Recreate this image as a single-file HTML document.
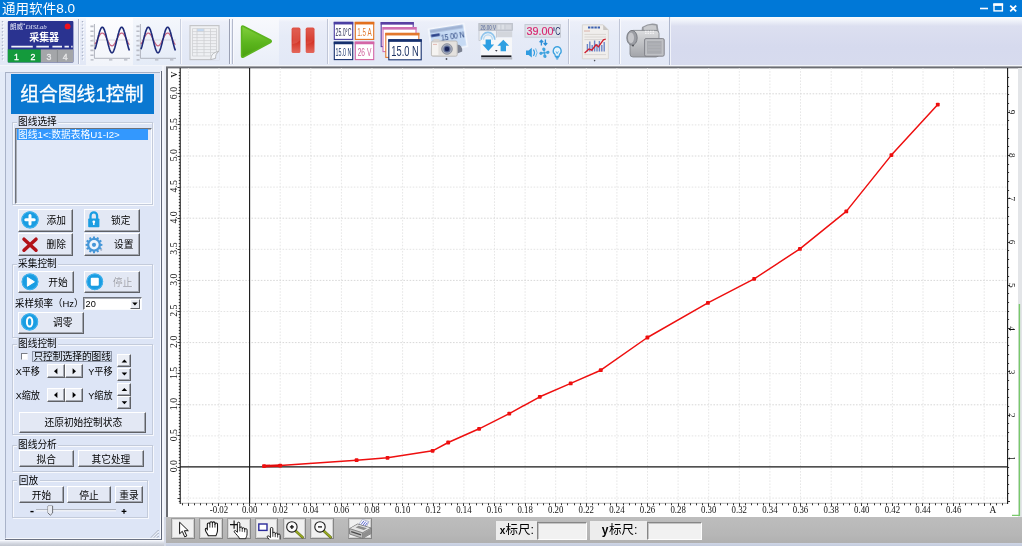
<!DOCTYPE html>
<html><head><meta charset="utf-8"><title>DISLab 8.0</title>
<style>
html,body{margin:0;padding:0;}
body{width:1022px;height:546px;overflow:hidden;position:relative;background:#dbe5f5;font-family:"Liberation Sans",sans-serif;}
#app{position:absolute;left:0;top:0;width:1022px;height:546px;overflow:hidden;}
#app>div{position:absolute;}
#app>svg{position:absolute;left:0;top:0;opacity:0.999;}
text{font-family:"Liberation Serif",serif;}
.ss{font-family:"Liberation Sans",sans-serif;}
.cj{font-family:"Liberation Sans","Noto Sans CJK SC",sans-serif;}
</style></head><body>
<div id="app">
<div style="left:0px;top:0px;width:1022px;height:17px;background:#0078d7;"></div>
<div style="left:0px;top:17px;width:1022px;height:49px;background:linear-gradient(#fbfcfe 0,#eef1f9 4px,#dcdff0 9px,#d6daee 30px,#d7dbee 100%);"></div>
<div style="left:0px;top:17px;width:669px;height:48px;background:linear-gradient(#fafbfe 0,#eceff9 5px,#e6ebf7 40%,#e2e8f6 100%);border-right:1px solid #aeb7cd;box-shadow:1px 0 0 #f1f3fa;"></div>
<div style="left:0px;top:65px;width:1022px;height:1px;background:#f3f5fa;"></div>
<div style="left:0px;top:66px;width:166px;height:6px;background:#e9eef8;"></div>
<div style="left:86px;top:18px;width:47px;height:47px;background:linear-gradient(#fdfdff,#f1f4fa);"></div>
<div style="left:133px;top:18px;width:47px;height:47px;background:linear-gradient(#f4f7fc,#e4ebf7);"></div>
<div style="left:234px;top:18px;width:45px;height:47px;background:linear-gradient(#f8f9fd,#e9eef8);"></div>
<div style="left:0px;top:72px;width:166px;height:474px;background:#e4ebf8;"></div>
<div style="left:5px;top:72px;width:156px;height:467px;background:#dde5f6;box-sizing:border-box;border-left:1px solid #a9b3c9;border-top:1px solid #a7b0c4;border-right:1px solid #f7f9fd;border-bottom:1px solid #f7f9fd;"></div>
<div style="left:160px;top:72px;width:1px;height:468px;background:#f7f9fd;"></div>
<div style="left:161px;top:71px;width:1px;height:470px;background:#5f6677;"></div>
<div style="left:162px;top:66px;width:4px;height:480px;background:#f4f6fb;"></div>
<div style="left:5px;top:539px;width:157px;height:1px;background:#6a7182;"></div>
<div style="left:0px;top:540px;width:166px;height:1px;background:#f6f8fc;"></div>
<div style="left:0px;top:541px;width:166px;height:5px;background:linear-gradient(#eceff6,#d3d7e0 50%,#c2c6cf);"></div>
<div style="left:11px;top:74px;width:143px;height:40px;background:#0a78d1;"></div>
<div style="left:12px;top:122px;width:141px;height:83px;box-sizing:border-box;border:1px solid #c3cbdb;box-shadow:inset 1px 1px 0 #f6f8fd, 1px 1px 0 #f6f8fd;"></div>
<div style="left:16.5px;top:116.3px;width:41.8px;height:11px;background:#dde5f6;"></div>
<div style="left:15px;top:128px;width:137px;height:76px;background:#e2e9f8;box-sizing:border-box;border-top:1px solid #6e727a;border-left:1px solid #6e727a;border-right:1px solid #f9fbfe;border-bottom:1px solid #f9fbfe;box-shadow:inset 1px 1px 0 #a9adb6;"></div>
<div style="left:16.6px;top:128.8px;width:131.6px;height:10.8px;background:#3398fe;"></div>
<div style="left:18px;top:209px;width:55px;height:22.5px;background:#e3e8f4;box-sizing:border-box;border-top:1px solid #fff;border-left:1px solid #fff;border-right:1px solid #5f6166;border-bottom:1px solid #5f6166;box-shadow:inset -1px -1px 0 #a3a7b0;"></div>
<div style="left:84px;top:209px;width:55.5px;height:22.5px;background:#e3e8f4;box-sizing:border-box;border-top:1px solid #fff;border-left:1px solid #fff;border-right:1px solid #5f6166;border-bottom:1px solid #5f6166;box-shadow:inset -1px -1px 0 #a3a7b0;"></div>
<div style="left:18px;top:233.4px;width:55px;height:22.5px;background:#e3e8f4;box-sizing:border-box;border-top:1px solid #fff;border-left:1px solid #fff;border-right:1px solid #5f6166;border-bottom:1px solid #5f6166;box-shadow:inset -1px -1px 0 #a3a7b0;"></div>
<div style="left:84px;top:233.4px;width:55.5px;height:22.5px;background:#e3e8f4;box-sizing:border-box;border-top:1px solid #fff;border-left:1px solid #fff;border-right:1px solid #5f6166;border-bottom:1px solid #5f6166;box-shadow:inset -1px -1px 0 #a3a7b0;"></div>
<div style="left:12px;top:264px;width:141px;height:74px;box-sizing:border-box;border:1px solid #c3cbdb;box-shadow:inset 1px 1px 0 #f6f8fd, 1px 1px 0 #f6f8fd;"></div>
<div style="left:16.5px;top:258.3px;width:41.8px;height:11px;background:#dde5f6;"></div>
<div style="left:18px;top:270.5px;width:56px;height:22.5px;background:#e3e8f4;box-sizing:border-box;border-top:1px solid #fff;border-left:1px solid #fff;border-right:1px solid #5f6166;border-bottom:1px solid #5f6166;box-shadow:inset -1px -1px 0 #a3a7b0;"></div>
<div style="left:84px;top:270.5px;width:55.5px;height:22.5px;background:#e3e8f4;box-sizing:border-box;border-top:1px solid #fff;border-left:1px solid #fff;border-right:1px solid #5f6166;border-bottom:1px solid #5f6166;box-shadow:inset -1px -1px 0 #a3a7b0;"></div>
<div style="left:82.5px;top:296.8px;width:59px;height:13.4px;background:#fff;box-sizing:border-box;border-top:1px solid #6e727a;border-left:1px solid #6e727a;border-right:1px solid #f9fbfe;border-bottom:1px solid #f9fbfe;box-shadow:inset 1px 1px 0 #a9adb6;"></div>
<div style="left:129.6px;top:298.6px;width:10.6px;height:10.2px;background:#e8ebf2;box-sizing:border-box;border-top:1px solid #fff;border-left:1px solid #fff;border-right:1px solid #5f6166;border-bottom:1px solid #5f6166;"></div>
<div style="left:18px;top:311.7px;width:66px;height:22px;background:#e3e8f4;box-sizing:border-box;border-top:1px solid #fff;border-left:1px solid #fff;border-right:1px solid #5f6166;border-bottom:1px solid #5f6166;box-shadow:inset -1px -1px 0 #a3a7b0;"></div>
<div style="left:12px;top:344px;width:141px;height:91px;box-sizing:border-box;border:1px solid #c3cbdb;box-shadow:inset 1px 1px 0 #f6f8fd, 1px 1px 0 #f6f8fd;"></div>
<div style="left:16.5px;top:338.1px;width:41.8px;height:11px;background:#dde5f6;"></div>
<div style="left:21px;top:353px;width:7.4px;height:7.4px;background:#fff;box-sizing:border-box;border-top:1px solid #7a7e86;border-left:1px solid #7a7e86;border-right:1px solid #f3f5fa;border-bottom:1px solid #f3f5fa;"></div>
<div style="left:32px;top:350.8px;width:80.4px;height:11.6px;background:#d5dfef;box-sizing:border-box;border:1px solid #8e96a8;"></div>
<div style="left:46.7px;top:364.2px;width:18px;height:14.2px;background:#ecEFf6;box-sizing:border-box;border-top:1px solid #fff;border-left:1px solid #fff;border-right:1px solid #5f6166;border-bottom:1px solid #5f6166;box-shadow:inset -1px -1px 0 #a3a7b0;"></div>
<div style="left:64.8px;top:364.2px;width:18.2px;height:14.2px;background:#ecEFf6;box-sizing:border-box;border-top:1px solid #fff;border-left:1px solid #fff;border-right:1px solid #5f6166;border-bottom:1px solid #5f6166;box-shadow:inset -1px -1px 0 #a3a7b0;"></div>
<div style="left:46.7px;top:388px;width:18px;height:14.2px;background:#ecEFf6;box-sizing:border-box;border-top:1px solid #fff;border-left:1px solid #fff;border-right:1px solid #5f6166;border-bottom:1px solid #5f6166;box-shadow:inset -1px -1px 0 #a3a7b0;"></div>
<div style="left:64.8px;top:388px;width:18.2px;height:14.2px;background:#ecEFf6;box-sizing:border-box;border-top:1px solid #fff;border-left:1px solid #fff;border-right:1px solid #5f6166;border-bottom:1px solid #5f6166;box-shadow:inset -1px -1px 0 #a3a7b0;"></div>
<div style="left:117.4px;top:354px;width:14px;height:13.2px;background:#ecEFf6;box-sizing:border-box;border-top:1px solid #fff;border-left:1px solid #fff;border-right:1px solid #5f6166;border-bottom:1px solid #5f6166;box-shadow:inset -1px -1px 0 #a3a7b0;"></div>
<div style="left:117.4px;top:367.6px;width:14px;height:13px;background:#e6ebf5;box-sizing:border-box;border-top:1px solid #fff;border-left:1px solid #fff;border-right:1px solid #5f6166;border-bottom:1px solid #5f6166;box-shadow:inset -1px -1px 0 #a3a7b0;"></div>
<div style="left:117.4px;top:382.6px;width:14px;height:13.2px;background:#ecEFf6;box-sizing:border-box;border-top:1px solid #fff;border-left:1px solid #fff;border-right:1px solid #5f6166;border-bottom:1px solid #5f6166;box-shadow:inset -1px -1px 0 #a3a7b0;"></div>
<div style="left:117.4px;top:396.20000000000005px;width:14px;height:13px;background:#e6ebf5;box-sizing:border-box;border-top:1px solid #fff;border-left:1px solid #fff;border-right:1px solid #5f6166;border-bottom:1px solid #5f6166;box-shadow:inset -1px -1px 0 #a3a7b0;"></div>
<div style="left:19px;top:411.5px;width:127px;height:21px;background:#e3e8f4;box-sizing:border-box;border-top:1px solid #fff;border-left:1px solid #fff;border-right:1px solid #5f6166;border-bottom:1px solid #5f6166;box-shadow:inset -1px -1px 0 #a3a7b0;"></div>
<div style="left:12px;top:445px;width:141px;height:26.5px;box-sizing:border-box;border:1px solid #c3cbdb;box-shadow:inset 1px 1px 0 #f6f8fd, 1px 1px 0 #f6f8fd;"></div>
<div style="left:16.5px;top:438.9px;width:41.8px;height:11px;background:#dde5f6;"></div>
<div style="left:18.7px;top:450.2px;width:55.4px;height:17.2px;background:#e3e8f4;box-sizing:border-box;border-top:1px solid #fff;border-left:1px solid #fff;border-right:1px solid #5f6166;border-bottom:1px solid #5f6166;box-shadow:inset -1px -1px 0 #a3a7b0;"></div>
<div style="left:78.2px;top:450.2px;width:65.4px;height:17.2px;background:#e3e8f4;box-sizing:border-box;border-top:1px solid #fff;border-left:1px solid #fff;border-right:1px solid #5f6166;border-bottom:1px solid #5f6166;box-shadow:inset -1px -1px 0 #a3a7b0;"></div>
<div style="left:12px;top:480.4px;width:136px;height:38px;box-sizing:border-box;border:1px solid #c3cbdb;box-shadow:inset 1px 1px 0 #f6f8fd, 1px 1px 0 #f6f8fd;"></div>
<div style="left:17.2px;top:474.5px;width:22.4px;height:11px;background:#dde5f6;"></div>
<div style="left:19px;top:486.3px;width:44.8px;height:17.2px;background:#e3e8f4;box-sizing:border-box;border-top:1px solid #fff;border-left:1px solid #fff;border-right:1px solid #5f6166;border-bottom:1px solid #5f6166;box-shadow:inset -1px -1px 0 #a3a7b0;"></div>
<div style="left:66.9px;top:486.3px;width:44.4px;height:17.2px;background:#e3e8f4;box-sizing:border-box;border-top:1px solid #fff;border-left:1px solid #fff;border-right:1px solid #5f6166;border-bottom:1px solid #5f6166;box-shadow:inset -1px -1px 0 #a3a7b0;"></div>
<div style="left:114.7px;top:486.3px;width:28.8px;height:17.2px;background:#e3e8f4;box-sizing:border-box;border-top:1px solid #fff;border-left:1px solid #fff;border-right:1px solid #5f6166;border-bottom:1px solid #5f6166;box-shadow:inset -1px -1px 0 #a3a7b0;"></div>
<div style="left:164px;top:66px;width:858px;height:452px;background:#e9edf5;"></div>
<div style="left:166px;top:66px;width:856px;height:451px;background:#6b6d72;border-top:1px solid #a3a5aa;box-sizing:border-box;"></div>
<div style="left:168px;top:68px;width:851px;height:448.5px;background:#fff;border-top:1px solid #c4c5c8;box-sizing:border-box;"></div>
<div style="left:1018.4px;top:68px;width:4px;height:449px;background:#e3e5e8;"></div>
<div style="left:166px;top:517px;width:856px;height:26px;background:linear-gradient(#bdbdbd,#b6b6b6 70%,#b0b0b0);"></div>
<div style="left:166px;top:543px;width:856px;height:3px;background:linear-gradient(#cfd6e6,#c3cbdd);"></div>
<div style="left:164px;top:517px;width:2px;height:29px;background:#d5dae6;"></div>
<div style="left:171.3px;top:518.4px;width:23.6px;height:20.6px;background:#f0f0f0;box-sizing:border-box;border-top:1px solid #9c9c9c;border-left:1px solid #999;border-right:1px solid #858585;border-bottom:1px solid #858585;box-shadow:inset 1px 1px 0 #d9d9d9, inset -1px -1px 0 #cfcfcf;"></div>
<div style="left:199.3px;top:518.4px;width:23.6px;height:20.6px;background:#f0f0f0;box-sizing:border-box;border-top:1px solid #9c9c9c;border-left:1px solid #999;border-right:1px solid #858585;border-bottom:1px solid #858585;box-shadow:inset 1px 1px 0 #d9d9d9, inset -1px -1px 0 #cfcfcf;"></div>
<div style="left:227px;top:518.4px;width:23.6px;height:20.6px;background:#f0f0f0;box-sizing:border-box;border-top:1px solid #9c9c9c;border-left:1px solid #999;border-right:1px solid #858585;border-bottom:1px solid #858585;box-shadow:inset 1px 1px 0 #d9d9d9, inset -1px -1px 0 #cfcfcf;"></div>
<div style="left:254.6px;top:518.4px;width:23.6px;height:20.6px;background:#f0f0f0;box-sizing:border-box;border-top:1px solid #9c9c9c;border-left:1px solid #999;border-right:1px solid #858585;border-bottom:1px solid #858585;box-shadow:inset 1px 1px 0 #d9d9d9, inset -1px -1px 0 #cfcfcf;"></div>
<div style="left:282.5px;top:518.4px;width:23.6px;height:20.6px;background:#f0f0f0;box-sizing:border-box;border-top:1px solid #9c9c9c;border-left:1px solid #999;border-right:1px solid #858585;border-bottom:1px solid #858585;box-shadow:inset 1px 1px 0 #d9d9d9, inset -1px -1px 0 #cfcfcf;"></div>
<div style="left:310.2px;top:518.4px;width:23.6px;height:20.6px;background:#f0f0f0;box-sizing:border-box;border-top:1px solid #9c9c9c;border-left:1px solid #999;border-right:1px solid #858585;border-bottom:1px solid #858585;box-shadow:inset 1px 1px 0 #d9d9d9, inset -1px -1px 0 #cfcfcf;"></div>
<div style="left:348.4px;top:518.4px;width:24px;height:20.6px;background:#f0f0f0;box-sizing:border-box;border-top:1px solid #9c9c9c;border-left:1px solid #999;border-right:1px solid #858585;border-bottom:1px solid #858585;box-shadow:inset 1px 1px 0 #d9d9d9, inset -1px -1px 0 #cfcfcf;"></div>
<div style="left:496.4px;top:521.4px;width:40.6px;height:19px;background:#ededed;"></div>
<div style="left:590.4px;top:521.4px;width:56.6px;height:19px;background:#ededed;"></div>
<div style="left:536.6px;top:521.6px;width:50.4px;height:18.6px;background:#f1f1f1;box-sizing:border-box;border-top:1px solid #868686;border-left:1px solid #868686;border-right:1px solid #fdfdfd;border-bottom:1px solid #fdfdfd;box-shadow:inset 1px 1px 0 #c4c4c4;"></div>
<div style="left:647.2px;top:521.6px;width:55px;height:18.6px;background:#f1f1f1;box-sizing:border-box;border-top:1px solid #868686;border-left:1px solid #868686;border-right:1px solid #fdfdfd;border-bottom:1px solid #fdfdfd;box-shadow:inset 1px 1px 0 #c4c4c4;"></div>
<svg width="1022" height="546" viewBox="0 0 1022 546">
<text class="cj" x="2" y="13.4" font-size="13" fill="#fff" textLength="73.1" lengthAdjust="spacingAndGlyphs">通用软件8.0</text>
<g stroke="#fff" fill="none"><path d="M980 8.5H988" stroke-width="1.6"/><rect x="994" y="4.3" width="8.4" height="6.6" stroke-width="1.4"/><path d="M993.3 4.6H1003.1" stroke-width="2.6"/><path d="M1010.2 5.6L1016.2 11.4M1016.2 5.6L1010.2 11.4" stroke-width="1.8"/></g>
<path d="M2.5 21V61" stroke="#aab2c8" stroke-width="1.4" stroke-dasharray="1.2 2.2"/><path d="M3.5 22V62" stroke="#fff" stroke-width="1" stroke-dasharray="1.2 2.2"/>
<path d="M78.5 19V64" stroke="#aeb5c8" stroke-width="1"/><path d="M79.5 19V64" stroke="#f8f9fd" stroke-width="1"/>
<path d="M82.5 21V61" stroke="#aab2c8" stroke-width="1.4" stroke-dasharray="1.2 2.2"/><path d="M83.5 22V62" stroke="#fff" stroke-width="1" stroke-dasharray="1.2 2.2"/>
<path d="M180.5 19V64" stroke="#c9cfdf" stroke-width="1"/><path d="M181.5 19V64" stroke="#f8f9fd" stroke-width="1"/>
<path d="M229.5 19V64" stroke="#9aa0b3" stroke-width="1"/><path d="M230.5 19V64" stroke="#f8f9fd" stroke-width="1"/>
<path d="M232.5 19V64" stroke="#b4bacc" stroke-width="1"/><path d="M233.5 19V64" stroke="#f8f9fd" stroke-width="1"/>
<path d="M327.5 19V64" stroke="#c0c6d7" stroke-width="1"/><path d="M328.5 19V64" stroke="#f8f9fd" stroke-width="1"/>
<path d="M568.5 19V64" stroke="#c0c6d7" stroke-width="1"/><path d="M569.5 19V64" stroke="#f8f9fd" stroke-width="1"/>
<path d="M619.5 19V64" stroke="#c0c6d7" stroke-width="1"/><path d="M620.5 19V64" stroke="#f8f9fd" stroke-width="1"/>
<rect x="7.8" y="21" width="65.6" height="41.4" rx="1" fill="#2a3390"/><rect x="7.8" y="49.4" width="33" height="13" fill="#149a3c"/><rect x="40.8" y="49.4" width="32.6" height="13" fill="#a4a6a9"/><path d="M57.4 49.4V62.4" stroke="#8b8d90" stroke-width="1"/><path d="M11.3 46.6H32.8M36.3 46.6H48.9M52.4 46.6H62M64.5 46.6H68.9M71.2 46.6H72.6" stroke="#f2f3fb" stroke-width="1.7"/><circle cx="67.6" cy="26.4" r="2.9" fill="#f0101c"/>
<text class="cj" x="10" y="28.8" font-size="6.5" fill="#e8eafa" textLength="13" lengthAdjust="spacingAndGlyphs">朗威</text>
<text x="25.4" y="28.8" font-size="6.2" font-style="italic" fill="#dfe2f7" textLength="21.4" lengthAdjust="spacingAndGlyphs">DISLab</text><circle cx="24.2" cy="24.2" r="0.75" fill="#e8eafa"/>
<text class="cj" x="29.2" y="41.4" font-size="10" font-weight="bold" fill="#fff" textLength="29.9" lengthAdjust="spacingAndGlyphs">采集器</text>
<text class="ss" x="16.4" y="59.9" font-size="8.8" stroke="#fff" stroke-width="0.3" text-anchor="middle" fill="#fff">1</text>
<text class="ss" x="32.9" y="59.9" font-size="8.8" stroke="#fff" stroke-width="0.3" text-anchor="middle" fill="#fff">2</text>
<text class="ss" x="49" y="59.9" font-size="8.8" stroke="#e9e9ea" stroke-width="0.3" text-anchor="middle" fill="#e9e9ea">3</text>
<text class="ss" x="65.2" y="59.9" font-size="8.8" stroke="#e9e9ea" stroke-width="0.3" text-anchor="middle" fill="#e9e9ea">4</text>
<path d="M94.4 24V58.3H130" stroke="#b0b3bd" stroke-width="1" fill="none"/><path d="M90.4 26.4h3.2M90.4 31.2h3.2M90.4 36h3.2M90.4 40.8h3.2M90.4 45.6h3.2M90.4 50.4h3.2M90.4 55.2h3.2" stroke="#b9bcc6" stroke-width="1.6"/><path d="M109 59.8h3.4M124 59.8h3.4M90.6 59.8h3" stroke="#b4b7c1" stroke-width="1.3"/><path d="M91.8 40H130" stroke="#d2d4dc" stroke-width="0.9"/><path d="M95.0 44.1 L95.4 43.4 L95.9 42.7 L96.3 41.9 L96.7 41.0 L97.2 40.1 L97.6 39.2 L98.0 38.3 L98.4 37.5 L98.9 36.6 L99.3 35.9 L99.7 35.2 L100.2 34.5 L100.6 34.0 L101.0 33.6 L101.5 33.3 L101.9 33.1 L102.3 33.0 L102.7 33.1 L103.2 33.2 L103.6 33.5 L104.0 34.0 L104.5 34.5 L104.9 35.1 L105.3 35.8 L105.8 36.6 L106.2 37.4 L106.6 38.3 L107.0 39.2 L107.5 40.1 L107.9 40.9 L108.3 41.8 L108.8 42.6 L109.2 43.3 L109.6 44.0 L110.0 44.6 L110.5 45.1 L110.9 45.4 L111.3 45.7 L111.8 45.8 L112.2 45.8 L112.6 45.7 L113.1 45.4 L113.5 45.0 L113.9 44.6 L114.3 44.0 L114.8 43.3 L115.2 42.6 L115.6 41.8 L116.1 40.9 L116.5 40.0 L116.9 39.1 L117.4 38.2 L117.8 37.4 L118.2 36.5 L118.7 35.8 L119.1 35.1 L119.5 34.5 L119.9 33.9 L120.4 33.5 L120.8 33.2 L121.2 33.1 L121.7 33.0 L122.1 33.1 L122.5 33.3 L123.0 33.6 L123.4 34.0 L123.8 34.6 L124.2 35.2 L124.7 35.9 L125.1 36.7 L125.5 37.5 L126.0 38.4 L126.4 39.3 L126.8 40.2 L127.2 41.0 L127.7 41.9 L128.1 42.7 L128.5 43.4 L129.0 44.1 L129.4 44.6" stroke="#c8627f" stroke-width="1.2" fill="none"/><path d="M95.0 49.3 L95.4 48.0 L95.9 46.5 L96.3 44.9 L96.7 43.2 L97.2 41.5 L97.6 39.7 L98.0 37.9 L98.4 36.1 L98.9 34.5 L99.3 32.9 L99.7 31.5 L100.2 30.2 L100.6 29.2 L101.0 28.3 L101.5 27.7 L101.9 27.3 L102.3 27.2 L102.7 27.3 L103.2 27.7 L103.6 28.3 L104.0 29.1 L104.5 30.2 L104.9 31.4 L105.3 32.8 L105.8 34.4 L106.2 36.0 L106.6 37.8 L107.0 39.5 L107.5 41.3 L107.9 43.1 L108.3 44.8 L108.8 46.4 L109.2 47.9 L109.6 49.2 L110.0 50.4 L110.5 51.3 L110.9 52.0 L111.3 52.5 L111.8 52.8 L112.2 52.8 L112.6 52.5 L113.1 52.0 L113.5 51.3 L113.9 50.3 L114.3 49.2 L114.8 47.8 L115.2 46.3 L115.6 44.7 L116.1 43.0 L116.5 41.2 L116.9 39.5 L117.4 37.7 L117.8 35.9 L118.2 34.3 L118.7 32.7 L119.1 31.3 L119.5 30.1 L119.9 29.1 L120.4 28.3 L120.8 27.7 L121.2 27.3 L121.7 27.2 L122.1 27.3 L122.5 27.7 L123.0 28.4 L123.4 29.2 L123.8 30.3 L124.2 31.6 L124.7 33.0 L125.1 34.6 L125.5 36.2 L126.0 38.0 L126.4 39.7 L126.8 41.5 L127.2 43.3 L127.7 45.0 L128.1 46.6 L128.5 48.1 L129.0 49.4 L129.4 50.5" stroke="#1d2a79" stroke-width="1.6" fill="none" stroke-linejoin="round"/>
<path d="M140.4 24V58.3H176" stroke="#b0b3bd" stroke-width="1" fill="none"/><path d="M136.4 26.4h3.2M136.4 31.2h3.2M136.4 36h3.2M136.4 40.8h3.2M136.4 45.6h3.2M136.4 50.4h3.2M136.4 55.2h3.2" stroke="#b9bcc6" stroke-width="1.6"/><path d="M155 59.8h3.4M170 59.8h3.4M136.6 59.8h3" stroke="#b4b7c1" stroke-width="1.3"/><path d="M137.8 40H176" stroke="#d2d4dc" stroke-width="0.9"/><path d="M141.0 44.1 L141.4 43.4 L141.9 42.7 L142.3 41.9 L142.7 41.0 L143.2 40.1 L143.6 39.2 L144.0 38.3 L144.4 37.5 L144.9 36.6 L145.3 35.9 L145.7 35.2 L146.2 34.5 L146.6 34.0 L147.0 33.6 L147.4 33.3 L147.9 33.1 L148.3 33.0 L148.7 33.1 L149.2 33.2 L149.6 33.5 L150.0 34.0 L150.5 34.5 L150.9 35.1 L151.3 35.8 L151.8 36.6 L152.2 37.4 L152.6 38.3 L153.0 39.2 L153.5 40.1 L153.9 40.9 L154.3 41.8 L154.8 42.6 L155.2 43.3 L155.6 44.0 L156.1 44.6 L156.5 45.1 L156.9 45.4 L157.3 45.7 L157.8 45.8 L158.2 45.8 L158.6 45.7 L159.1 45.4 L159.5 45.0 L159.9 44.6 L160.3 44.0 L160.8 43.3 L161.2 42.6 L161.6 41.8 L162.1 40.9 L162.5 40.0 L162.9 39.1 L163.4 38.2 L163.8 37.4 L164.2 36.5 L164.7 35.8 L165.1 35.1 L165.5 34.5 L165.9 33.9 L166.4 33.5 L166.8 33.2 L167.2 33.1 L167.7 33.0 L168.1 33.1 L168.5 33.3 L169.0 33.6 L169.4 34.0 L169.8 34.6 L170.2 35.2 L170.7 35.9 L171.1 36.7 L171.5 37.5 L172.0 38.4 L172.4 39.3 L172.8 40.2 L173.2 41.0 L173.7 41.9 L174.1 42.7 L174.5 43.4 L175.0 44.1 L175.4 44.6" stroke="#c8627f" stroke-width="1.2" fill="none"/><path d="M141.0 49.3 L141.4 48.0 L141.9 46.5 L142.3 44.9 L142.7 43.2 L143.2 41.5 L143.6 39.7 L144.0 37.9 L144.4 36.1 L144.9 34.5 L145.3 32.9 L145.7 31.5 L146.2 30.2 L146.6 29.2 L147.0 28.3 L147.4 27.7 L147.9 27.3 L148.3 27.2 L148.7 27.3 L149.2 27.7 L149.6 28.3 L150.0 29.1 L150.5 30.2 L150.9 31.4 L151.3 32.8 L151.8 34.4 L152.2 36.0 L152.6 37.8 L153.0 39.5 L153.5 41.3 L153.9 43.1 L154.3 44.8 L154.8 46.4 L155.2 47.9 L155.6 49.2 L156.1 50.4 L156.5 51.3 L156.9 52.0 L157.3 52.5 L157.8 52.8 L158.2 52.8 L158.6 52.5 L159.1 52.0 L159.5 51.3 L159.9 50.3 L160.3 49.2 L160.8 47.8 L161.2 46.3 L161.6 44.7 L162.1 43.0 L162.5 41.2 L162.9 39.5 L163.4 37.7 L163.8 35.9 L164.2 34.3 L164.7 32.7 L165.1 31.3 L165.5 30.1 L165.9 29.1 L166.4 28.3 L166.8 27.7 L167.2 27.3 L167.7 27.2 L168.1 27.3 L168.5 27.7 L169.0 28.4 L169.4 29.2 L169.8 30.3 L170.2 31.6 L170.7 33.0 L171.1 34.6 L171.5 36.2 L172.0 38.0 L172.4 39.7 L172.8 41.5 L173.2 43.3 L173.7 45.0 L174.1 46.6 L174.5 48.1 L175.0 49.4 L175.4 50.5" stroke="#1d2a79" stroke-width="1.6" fill="none" stroke-linejoin="round"/>
<g opacity="0.75"><rect x="190" y="25.6" width="29" height="34" fill="#f2f2f2" stroke="#b9b9b9" stroke-width="1.2"/><rect x="197" y="28.6" width="7" height="3" fill="#b8d1ee"/><path d="M192.5 28.6H216.5V56H192.5ZM192.5 31.6H216.5M192.5 34.6H216.5M192.5 37.6H216.5M192.5 40.6H216.5M192.5 43.6H216.5M192.5 46.6H216.5M192.5 49.6H216.5M192.5 52.6H216.5M197 28.6V56M204 28.6V56M210.5 28.6V56" stroke="#c6c6c6" stroke-width="0.8" fill="none"/><path d="M219.6 50.5 L210.5 60.2 H219.6Z" fill="#e3e8f5"/><path d="M210.8 59.6 C211 55 213 52.5 218.8 51.4 C216 53.5 215.5 55.5 215.6 58.4Z" fill="#fafafa" stroke="#a9a9a9" stroke-width="1"/></g>
<defs><linearGradient id="gp" x1="0" y1="0" x2="0" y2="1"><stop offset="0" stop-color="#82cf3c"/><stop offset="0.55" stop-color="#5bb51d"/><stop offset="1" stop-color="#4aa010"/></linearGradient><linearGradient id="gr" x1="0" y1="0" x2="0" y2="1"><stop offset="0" stop-color="#e0564a"/><stop offset="0.5" stop-color="#d22c1f"/><stop offset="1" stop-color="#e4685c"/></linearGradient></defs>
<path d="M243.4 26.2 L270.3 40 Q272.2 41.3 270.3 42.6 L243.4 57 Q241.6 57.6 241.6 55.8 V27.4 Q241.7 25.6 243.4 26.2Z" fill="url(#gp)" stroke="#5cb41f" stroke-width="1.6" stroke-linejoin="round"/>
<rect x="291.6" y="27.6" width="8.8" height="25.4" rx="1.6" fill="url(#gr)"/><rect x="305.7" y="27.6" width="8.8" height="25.4" rx="1.6" fill="url(#gr)"/><path d="M292.4 44 Q296 44.5 299.8 40.5V29.5H292.4Z" fill="#e2675c" opacity="0.55"/><path d="M306.5 44 Q310 44.5 313.8 40.5V29.5H306.5Z" fill="#e2675c" opacity="0.35"/>
<rect x="334.3" y="22.4" width="18.4" height="17" fill="#fff" stroke="#4a3fa3" stroke-width="1.1"/><rect x="333.75" y="21.849999999999998" width="19.5" height="2.6" fill="#4a3fa3"/>
<text class="ss" x="343.5" y="35.5" font-size="10" text-anchor="middle" fill="#2a2f55" textLength="15.8" lengthAdjust="spacingAndGlyphs">25.0°C</text>
<rect x="355.3" y="22.4" width="18.4" height="17" fill="#fff" stroke="#e2701e" stroke-width="1.1"/><rect x="354.75" y="21.849999999999998" width="19.5" height="2.6" fill="#e2701e"/>
<text class="ss" x="364.5" y="35.5" font-size="10" text-anchor="middle" fill="#e07a30" textLength="14.4" lengthAdjust="spacingAndGlyphs">1.5 A</text>
<rect x="334.3" y="42.2" width="18.4" height="17.4" fill="#fff" stroke="#16306e" stroke-width="1.1"/><rect x="333.75" y="41.650000000000006" width="19.5" height="2.6" fill="#16306e"/>
<text class="ss" x="343.5" y="55.50000000000001" font-size="10" text-anchor="middle" fill="#1f3a70" textLength="15.8" lengthAdjust="spacingAndGlyphs">15.0 N</text>
<rect x="355.3" y="42.2" width="18.4" height="17.4" fill="#fff" stroke="#d465a6" stroke-width="1.1"/><rect x="354.75" y="41.650000000000006" width="19.5" height="2.6" fill="#d465a6"/>
<text class="ss" x="364.5" y="55.50000000000001" font-size="10" text-anchor="middle" fill="#d0609a" textLength="13.6" lengthAdjust="spacingAndGlyphs">26 V</text>
<rect x="381.2" y="22.6" width="32" height="24" fill="#fff" stroke="#5a3fa3" stroke-width="1.1"/><rect x="380.65" y="22.05" width="33.1" height="2.6" fill="#5a3fa3"/>
<rect x="383" y="27.6" width="33" height="24" fill="#fff" stroke="#d070b2" stroke-width="1.1"/><rect x="382.45" y="27.05" width="34.1" height="2.6" fill="#d070b2"/>
<rect x="385.8" y="33.4" width="33" height="24" fill="#fff" stroke="#e2782c" stroke-width="1.1"/><rect x="385.25" y="32.85" width="34.1" height="2.6" fill="#e2782c"/>
<rect x="388.8" y="39.8" width="32.4" height="20" fill="#fff" stroke="#16306e" stroke-width="1.1"/><rect x="388.25" y="39.25" width="33.5" height="2.6" fill="#16306e"/>
<text class="ss" x="405.0" y="55.964" font-size="14.6" text-anchor="middle" fill="#1f3566" textLength="27.4" lengthAdjust="spacingAndGlyphs">15.0 N</text>
<g><g transform="rotate(-9 447 37)"><rect x="430" y="26.4" width="35.6" height="23" fill="#c6daf4" stroke="#f6f8fd" stroke-width="1.6"/><rect x="431.2" y="27.4" width="33" height="3.2" fill="#9fb2d3"/><rect x="431.4" y="32.2" width="8.8" height="2.5" fill="#263c86"/><text class="ss" x="441" y="40.2" font-size="9.4" fill="#27417c" textLength="23.6" lengthAdjust="spacingAndGlyphs">15 00 N</text></g><path d="M457 44.6 Q462.6 45 462.2 51.6 L457.4 53.4Z" fill="#7a8090"/><rect x="431.4" y="41" width="25.8" height="15.2" rx="1.4" fill="#e4e1de" stroke="#b4b1ae" stroke-width="0.8"/><rect x="433.4" y="39" width="6" height="2.4" fill="#d6d3d0"/><rect x="432" y="43" width="6.4" height="12" fill="#f5f3f1"/><path d="M433 44.4H437" stroke="#e0a9a0" stroke-width="0.8"/><circle cx="447" cy="49" r="5.3" fill="#a9aebb" stroke="#858b9a" stroke-width="0.9"/><circle cx="447" cy="49" r="3.5" fill="#5b6a96"/><circle cx="447" cy="49" r="2.3" fill="#1a2558"/><circle cx="446.5" cy="59" r="0.9" fill="#4d4f58"/></g>
<g><rect x="478.8" y="23.6" width="33.6" height="6.8" fill="#c5c9d1" stroke="#b4b8c1" stroke-width="0.7"/><text class="ss" x="480.4" y="29.6" font-size="6.8" fill="#5a6c9c" textLength="15.6" lengthAdjust="spacingAndGlyphs">26.00 V</text><rect x="497.4" y="24.6" width="3" height="4.8" fill="#dde0e6"/><rect x="501.4" y="24.6" width="3" height="4.8" fill="#dde0e6"/><rect x="505.4" y="24.6" width="6" height="4.8" fill="#d5d8df"/><rect x="479" y="30.6" width="17.6" height="10" fill="#eef1f6" stroke="#b9bdc6" stroke-width="0.7"/><rect x="497.2" y="31.2" width="15" height="6" fill="#d3d6dc"/><rect x="480.6" y="37.6" width="31.4" height="18" fill="#f6f7f9"/><path d="M481.2 39.8 A6.8 7.4 0 0 1 494.8 39.8" fill="none" stroke="#8ec4ec" stroke-width="1.6"/><path d="M483.6 39.8 A4.4 5 0 0 1 492.4 39.8" fill="none" stroke="#b3d8f3" stroke-width="1.3"/><path d="M485.6 39.6H491V44.6H494.2L488.3 51L482.4 44.6H485.6Z" fill="#2fa0e2"/><path d="M500.6 51.2H506V45.8H509.2L503.3 39.8L497.4 45.8H500.6Z" fill="#2fa0e2"/><path d="M495 50h2.6l-1.3 1.8z" fill="#3a3d4a"/><rect x="481.2" y="55.4" width="30.2" height="1.9" fill="#1b1c22"/><rect x="481.2" y="57.3" width="31" height="2.2" fill="#b4b7bf"/></g>
<g><rect x="525" y="24.6" width="35.4" height="12.6" fill="#dfe3ea" stroke="#c3c8d2" stroke-width="1"/><text class="ss" x="526.4" y="35.2" font-size="11.6" fill="#d8246e" stroke="#d8246e" stroke-width="0.15" textLength="27" lengthAdjust="spacingAndGlyphs">39.00</text><text class="ss" x="552.4" y="35.2" font-size="10" fill="#1f2f6a" textLength="8" lengthAdjust="spacingAndGlyphs">°C</text><path d="M541.4 45.6V40.6M539.6 42.2L541.4 40.2L543.2 42.2M545.4 39.6V44.6M543.6 43L545.4 45L547.2 43" stroke="#2d8fd8" stroke-width="1.3" fill="none"/><path d="M526 50.4H528.6L531.8 47.8V57.6L528.6 55H526Z" fill="#2f9be0"/><path d="M533.4 49.6Q535.6 52.7 533.4 55.8" stroke="#2f9be0" stroke-width="1.2" fill="none"/><path d="M535.6 48.4Q538.6 52.7 535.6 57" stroke="#6fbbe9" stroke-width="1" fill="none"/><g fill="#41a3df"><circle cx="544.4" cy="52.8" r="1.4"/><path d="M544.4 51.6 C542 50.8 541.4 48.4 543.6 47.6 C546 47.8 546 50.6 544.4 51.6Z M545.6 52.8 C546.4 50.4 548.8 49.8 549.6 52 C549.4 54.4 546.6 54.4 545.6 52.8Z M544.4 54 C546.8 54.8 547.4 57.2 545.2 58 C542.8 57.8 542.8 55 544.4 54Z M543.2 52.8 C542.4 55.2 540 55.8 539.2 53.6 C539.4 51.2 542.2 51.2 543.2 52.8Z"/></g><path d="M557.2 46.6 A4.3 4.3 0 0 1 559.6 54.2 L559 56.4H555.4L554.8 54.2 A4.3 4.3 0 0 1 557.2 46.6Z" fill="#e6f4fc" stroke="#3ba0df" stroke-width="1.3"/><path d="M555.6 57.6H558.8M556.2 59H558.2" stroke="#3ba0df" stroke-width="1.1"/><path d="M556 51.4L557.2 53.6L558.4 51.4" stroke="#3ba0df" stroke-width="0.8" fill="none"/></g>
<g><path d="M582.4 24.8H603.2L608.4 30V58.8H582.4Z" fill="#f0eeec" stroke="#d3d0cd" stroke-width="0.8"/><path d="M603.2 24.8V30H608.4Z" fill="#c9c6c3"/><path d="M588 27.6H600.6" stroke="#3a5fb0" stroke-width="2" stroke-dasharray="2.4 0.8"/><path d="M584 31H590" stroke="#d8a9a0" stroke-width="0.9"/><path d="M584.4 34.4H606M584.4 37H606M584.4 39.6H606" stroke="#d9d6d3" stroke-width="1"/><path d="M587.4 51.6V44M589.8 51.6V41.4M592.2 51.6V45M594.6 51.6V40.6M597 51.6V44M599.4 51.6V41M601.8 51.6V45M604.2 51.6V42" stroke="#6c86c9" stroke-width="1.4"/><path d="M584.6 53 L589 49 L591.8 50.2 L596 44.8 L598.4 46.8 L603.4 39.8 L605.8 39" stroke="#d01c2c" stroke-width="1.3" fill="none"/><path d="M584.4 54.6H606" stroke="#d9d6d3" stroke-width="1"/><circle cx="594.6" cy="60.6" r="0.8" fill="#4d4f58"/></g>
<defs><linearGradient id="gc" x1="0" y1="0" x2="0" y2="1"><stop offset="0" stop-color="#dcdddf"/><stop offset="1" stop-color="#a2a4a9"/></linearGradient></defs><g><path d="M642 27 Q650 21.6 657.6 24.4 L658.8 33 L641 36Z" fill="#97999f"/><path d="M643.6 27.4 Q650 23.6 656 25.6 L656.8 31 L644 33.6Z" fill="#c9cacd"/><rect x="630" y="30.4" width="29" height="26.6" rx="3" fill="url(#gc)" stroke="#7e8086" stroke-width="0.8"/><ellipse cx="632" cy="37.8" rx="5.2" ry="7.4" fill="#9c9ea4" stroke="#6f7177" stroke-width="0.8"/><ellipse cx="631" cy="37.8" rx="3" ry="5.2" fill="#c6c7cb"/><path d="M645 31.4H654M645 33.4H654" stroke="#f1f1f3" stroke-width="1.1" stroke-dasharray="1.6 0.9"/><circle cx="633" cy="45.6" r="0.9" fill="#44464c"/><rect x="644.6" y="38.6" width="19.6" height="17.6" rx="1.4" fill="#bfc1c5" stroke="#7a7c82" stroke-width="0.9"/><rect x="647" y="41" width="14.6" height="12.8" fill="#a9abb0"/><path d="M648 44H660.6M648 47H660.6M648 50H660.6" stroke="#b6b8bd" stroke-width="0.9"/></g>
<text class="cj" x="20.2" y="101.1" font-size="18.8" fill="#fff" stroke="#fff" stroke-width="0.3" textLength="123.3" lengthAdjust="spacingAndGlyphs">组合图线1控制</text>
<text class="cj" x="18" y="125.3" font-size="9.7" fill="#000" textLength="38.8" lengthAdjust="spacingAndGlyphs">图线选择</text>
<text class="cj" x="18" y="137.9" font-size="9.7" fill="#fff" textLength="101.8" lengthAdjust="spacingAndGlyphs">图线1&lt;:数据表格U1-I2&gt;</text>
<circle cx="30" cy="219.8" r="8.6" fill="#1a9de2"/><circle cx="30" cy="219.8" r="8.0" fill="none" stroke="#45b4ee" stroke-width="1"/>
<path d="M30 215.6V224M25.8 219.8H34.2" stroke="#fff" stroke-width="3" stroke-linecap="round"/>
<text class="cj" x="46.6" y="223.7" font-size="9.7" fill="#000" textLength="19.4" lengthAdjust="spacingAndGlyphs">添加</text>
<rect x="88.2" y="218.4" width="11.2" height="8.8" rx="0.8" fill="#1a9de2"/><path d="M90.5 219V215.8A3.3 3.4 0 0 1 97.1 215.8V219" fill="none" stroke="#1a9de2" stroke-width="2.3"/><circle cx="93.8" cy="221.8" r="1.4" fill="#fff"/><path d="M93.8 222V225" stroke="#fff" stroke-width="1.4"/>
<text class="cj" x="111" y="223.7" font-size="9.7" fill="#000" textLength="19.4" lengthAdjust="spacingAndGlyphs">锁定</text>
<path d="M24 239.2L36 250.2M36 239.2L24 250.2" stroke="#b21218" stroke-width="3.5" stroke-linecap="round"/>
<text class="cj" x="46.6" y="248.3" font-size="9.7" fill="#000" textLength="19.4" lengthAdjust="spacingAndGlyphs">删除</text>
<path d="M102.4 243.9 L102.4 245.7 L100.8 245.9 L100.5 247.2 L101.8 248.2 L100.9 249.8 L99.3 249.2 L98.4 250.1 L99.0 251.7 L97.4 252.6 L96.5 251.2 L95.1 251.6 L94.9 253.2 L93.1 253.2 L92.9 251.6 L91.6 251.3 L90.6 252.6 L89.0 251.7 L89.6 250.1 L88.7 249.2 L87.1 249.8 L86.2 248.2 L87.6 247.3 L87.2 245.9 L85.6 245.7 L85.6 243.9 L87.2 243.7 L87.5 242.4 L86.2 241.4 L87.1 239.8 L88.7 240.4 L89.6 239.5 L89.0 237.9 L90.6 237.0 L91.5 238.4 L92.9 238.0 L93.1 236.4 L94.9 236.4 L95.1 238.0 L96.4 238.3 L97.4 237.0 L99.0 237.9 L98.4 239.5 L99.3 240.4 L100.9 239.8 L101.8 241.4 L100.4 242.3 L100.8 243.7Z" fill="#4697d8"/><circle cx="94" cy="244.8" r="4.7" fill="#eef4fc"/><circle cx="94" cy="244.8" r="2.1" fill="#4697d8"/><circle cx="101.2" cy="249.8" r="1.1" fill="#a9b6cc"/>
<text class="cj" x="114" y="248.3" font-size="9.7" fill="#000" textLength="19.4" lengthAdjust="spacingAndGlyphs">设置</text>
<text class="cj" x="18" y="267.3" font-size="9.7" fill="#000" textLength="38.8" lengthAdjust="spacingAndGlyphs">采集控制</text>
<circle cx="30" cy="281.8" r="8.4" fill="#1a9de2"/><circle cx="30" cy="281.8" r="7.800000000000001" fill="none" stroke="#45b4ee" stroke-width="1"/>
<path d="M27.4 277.4L34.4 281.8L27.4 286.2Z" fill="#fff" stroke="#fff" stroke-width="1" stroke-linejoin="round"/>
<text class="cj" x="48.3" y="285.5" font-size="9.7" fill="#000" textLength="19.4" lengthAdjust="spacingAndGlyphs">开始</text>
<circle cx="94.8" cy="281.8" r="8.4" fill="#1a9de2"/><circle cx="94.8" cy="281.8" r="7.800000000000001" fill="none" stroke="#45b4ee" stroke-width="1"/>
<rect x="90.8" y="277.8" width="8" height="8" rx="1" fill="#fff"/>
<text class="cj" x="113.8" y="286.3" font-size="9.7" fill="#fbfcfe" textLength="19.4" lengthAdjust="spacingAndGlyphs">停止</text>
<text class="cj" x="113" y="285.5" font-size="9.7" fill="#9a9da6" textLength="19.4" lengthAdjust="spacingAndGlyphs">停止</text>
<text class="cj" x="15" y="307.1" font-size="9.7" fill="#000" textLength="68.6" lengthAdjust="spacingAndGlyphs">采样频率（Hz）</text>
<text class="ss" x="85.6" y="307" font-size="9.2" fill="#000">20</text>
<path d="M132.2 302.4H137.6L134.9 305.4Z" fill="#000"/>
<circle cx="29.6" cy="321.9" r="8.6" fill="#1a9de2"/><circle cx="29.6" cy="321.9" r="8.0" fill="none" stroke="#45b4ee" stroke-width="1"/>
<ellipse cx="29.6" cy="321.9" rx="2.7" ry="4.7" fill="none" stroke="#fff" stroke-width="2"/>
<text class="cj" x="53" y="326.1" font-size="9.7" fill="#000" textLength="19.4" lengthAdjust="spacingAndGlyphs">调零</text>
<text class="cj" x="18" y="347.1" font-size="9.7" fill="#000" textLength="38.8" lengthAdjust="spacingAndGlyphs">图线控制</text>
<text class="cj" x="33.4" y="360" font-size="9.7" fill="#000" textLength="77.6" lengthAdjust="spacingAndGlyphs">只控制选择的图线</text>
<text class="cj" x="15.7" y="375.1" font-size="9.7" fill="#000" textLength="24.3" lengthAdjust="spacingAndGlyphs">X平移</text>
<text class="cj" x="88.3" y="375.1" font-size="9.7" fill="#000" textLength="24.3" lengthAdjust="spacingAndGlyphs">Y平移</text>
<text class="cj" x="15.7" y="399.3" font-size="9.7" fill="#000" textLength="24.3" lengthAdjust="spacingAndGlyphs">X缩放</text>
<text class="cj" x="88.3" y="399.3" font-size="9.7" fill="#000" textLength="24.3" lengthAdjust="spacingAndGlyphs">Y缩放</text>
<path d="M57.4 368.3V374.3L54 371.3Z" fill="#000"/><path d="M72.6 368.3V374.3L76 371.3Z" fill="#000"/>
<path d="M57.4 392.1V398.1L54 395.1Z" fill="#000"/><path d="M72.6 392.1V398.1L76 395.1Z" fill="#000"/>
<path d="M121.6 362.4H127.2L124.4 359.4Z" fill="#000"/><path d="M121.6 372.6H127.2L124.4 375.6Z" fill="#000"/>
<path d="M121.6 391.0H127.2L124.4 388.0Z" fill="#000"/><path d="M121.6 401.20000000000005H127.2L124.4 404.20000000000005Z" fill="#000"/>
<text class="cj" x="44.5" y="425.7" font-size="9.7" fill="#000" textLength="77.6" lengthAdjust="spacingAndGlyphs">还原初始控制状态</text>
<text class="cj" x="18" y="447.9" font-size="9.7" fill="#000" textLength="38.8" lengthAdjust="spacingAndGlyphs">图线分析</text>
<text class="cj" x="36.5" y="462.5" font-size="9.7" fill="#000" textLength="19.4" lengthAdjust="spacingAndGlyphs">拟合</text>
<text class="cj" x="91.5" y="462.5" font-size="9.7" fill="#000" textLength="38.8" lengthAdjust="spacingAndGlyphs">其它处理</text>
<text class="cj" x="18.7" y="483.5" font-size="9.7" fill="#000" textLength="19.4" lengthAdjust="spacingAndGlyphs">回放</text>
<text class="cj" x="31.7" y="498.5" font-size="9.7" fill="#000" textLength="19.4" lengthAdjust="spacingAndGlyphs">开始</text>
<text class="cj" x="79.3" y="498.5" font-size="9.7" fill="#000" textLength="19.4" lengthAdjust="spacingAndGlyphs">停止</text>
<text class="cj" x="119.3" y="498.5" font-size="9.7" fill="#000" textLength="19.4" lengthAdjust="spacingAndGlyphs">重录</text>
<path d="M30.4 511.6H33.6" stroke="#000" stroke-width="1.4"/><path d="M121.6 511.4H126.4M124 509V513.8" stroke="#000" stroke-width="1.2"/><path d="M36 509.8H116" stroke="#9fa3ac" stroke-width="1"/><path d="M36 510.8H116" stroke="#fbfcfe" stroke-width="1"/><path d="M48 506H52.6V513L50.3 515.2L48 513Z" fill="#e6eaf3" stroke="#5f6166" stroke-width="0.9"/><path d="M48.4 513V506.4H52" stroke="#fff" stroke-width="0.8" fill="none"/>
<path d="M158.6 530L151 537.6M158.6 533L154 537.6M158.6 536L157 537.6" stroke="#9aa1b0" stroke-width="1"/><path d="M158.6 531L152 537.6M158.6 534L155 537.6" stroke="#fbfcfe" stroke-width="0.8"/>
<path d="M188.4 68V503.6M219.0 68V503.6M280.2 68V503.6M310.8 68V503.6M341.4 68V503.6M372.0 68V503.6M402.6 68V503.6M433.2 68V503.6M463.9 68V503.6M494.5 68V503.6M525.1 68V503.6M555.7 68V503.6M586.3 68V503.6M616.9 68V503.6M647.5 68V503.6M678.1 68V503.6M708.7 68V503.6M739.3 68V503.6M769.9 68V503.6M800.5 68V503.6M831.2 68V503.6M861.8 68V503.6M892.4 68V503.6M923.0 68V503.6M953.6 68V503.6M984.2 68V503.6" stroke="#e6e6e6" stroke-width="1" stroke-dasharray="1.6 1.5" fill="none"/><path d="M180.2 498.1H1007.6M180.2 435.9H1007.6M180.2 373.7H1007.6M180.2 311.5H1007.6M180.2 249.3H1007.6M180.2 187.1H1007.6M180.2 124.9H1007.6" stroke="#e4e4e4" stroke-width="1" stroke-dasharray="1.6 1.5" fill="none"/><path d="M180.2 404.8H1007.6M180.2 342.6H1007.6M180.2 280.4H1007.6M180.2 218.2H1007.6M180.2 156.0H1007.6M180.2 93.8H1007.6" stroke="#d8d8d8" stroke-width="1" stroke-dasharray="1.6 1.5" fill="none"/><path d="M180.2 503.3H1007.6" stroke="#b4b4b4" stroke-width="1" fill="none"/><path d="M180.2 68V504.0M1007.6 68V504.0M249.6 68V503.6" stroke="#161616" stroke-width="1.1" fill="none"/><path d="M180.2 466.9H1007.6" stroke="#161616" stroke-width="1.3" fill="none"/><path d="M180.2 501.5h-1.4M180.2 498.5h-2.7M180.2 494.5h-1.4M180.2 491.5h-1.4M180.2 488.5h-1.4M180.2 485.5h-1.4M180.2 482.5h-1.4M180.2 479.5h-1.4M180.2 476.5h-1.4M180.2 473.5h-1.4M180.2 470.5h-1.4M180.2 467.5h-2.7M180.2 463.5h-1.4M180.2 460.5h-1.4M180.2 457.5h-1.4M180.2 454.5h-1.4M180.2 451.5h-1.4M180.2 448.5h-1.4M180.2 445.5h-1.4M180.2 442.5h-1.4M180.2 439.5h-1.4M180.2 435.5h-2.7M180.2 432.5h-1.4M180.2 429.5h-1.4M180.2 426.5h-1.4M180.2 423.5h-1.4M180.2 420.5h-1.4M180.2 417.5h-1.4M180.2 414.5h-1.4M180.2 411.5h-1.4M180.2 407.5h-1.4M180.2 404.5h-2.7M180.2 401.5h-1.4M180.2 398.5h-1.4M180.2 395.5h-1.4M180.2 392.5h-1.4M180.2 389.5h-1.4M180.2 386.5h-1.4M180.2 383.5h-1.4M180.2 379.5h-1.4M180.2 376.5h-1.4M180.2 373.5h-2.7M180.2 370.5h-1.4M180.2 367.5h-1.4M180.2 364.5h-1.4M180.2 361.5h-1.4M180.2 358.5h-1.4M180.2 355.5h-1.4M180.2 351.5h-1.4M180.2 348.5h-1.4M180.2 345.5h-1.4M180.2 342.5h-2.7M180.2 339.5h-1.4M180.2 336.5h-1.4M180.2 333.5h-1.4M180.2 330.5h-1.4M180.2 327.5h-1.4M180.2 323.5h-1.4M180.2 320.5h-1.4M180.2 317.5h-1.4M180.2 314.5h-1.4M180.2 311.5h-2.7M180.2 308.5h-1.4M180.2 305.5h-1.4M180.2 302.5h-1.4M180.2 299.5h-1.4M180.2 295.5h-1.4M180.2 292.5h-1.4M180.2 289.5h-1.4M180.2 286.5h-1.4M180.2 283.5h-1.4M180.2 280.5h-2.7M180.2 277.5h-1.4M180.2 274.5h-1.4M180.2 271.5h-1.4M180.2 267.5h-1.4M180.2 264.5h-1.4M180.2 261.5h-1.4M180.2 258.5h-1.4M180.2 255.5h-1.4M180.2 252.5h-1.4M180.2 249.5h-2.7M180.2 246.5h-1.4M180.2 243.5h-1.4M180.2 239.5h-1.4M180.2 236.5h-1.4M180.2 233.5h-1.4M180.2 230.5h-1.4M180.2 227.5h-1.4M180.2 224.5h-1.4M180.2 221.5h-1.4M180.2 218.5h-2.7M180.2 215.5h-1.4M180.2 211.5h-1.4M180.2 208.5h-1.4M180.2 205.5h-1.4M180.2 202.5h-1.4M180.2 199.5h-1.4M180.2 196.5h-1.4M180.2 193.5h-1.4M180.2 190.5h-1.4M180.2 187.5h-2.7M180.2 183.5h-1.4M180.2 180.5h-1.4M180.2 177.5h-1.4M180.2 174.5h-1.4M180.2 171.5h-1.4M180.2 168.5h-1.4M180.2 165.5h-1.4M180.2 162.5h-1.4M180.2 159.5h-1.4M180.2 156.5h-2.7M180.2 152.5h-1.4M180.2 149.5h-1.4M180.2 146.5h-1.4M180.2 143.5h-1.4M180.2 140.5h-1.4M180.2 137.5h-1.4M180.2 134.5h-1.4M180.2 131.5h-1.4M180.2 128.5h-1.4M180.2 124.5h-2.7M180.2 121.5h-1.4M180.2 118.5h-1.4M180.2 115.5h-1.4M180.2 112.5h-1.4M180.2 109.5h-1.4M180.2 106.5h-1.4M180.2 103.5h-1.4M180.2 100.5h-1.4M180.2 96.5h-1.4M180.2 93.5h-2.7M180.2 90.5h-1.4M180.2 87.5h-1.4M180.2 84.5h-1.4M180.2 81.5h-1.4M180.2 78.5h-1.4M180.2 75.5h-1.4M180.2 72.5h-1.4M182.5 503.20000000000005v2.1M188.5 503.20000000000005v2.8M194.5 503.20000000000005v2.1M200.5 503.20000000000005v2.1M206.5 503.20000000000005v2.1M212.5 503.20000000000005v2.1M218.5 503.20000000000005v2.8M225.5 503.20000000000005v2.1M231.5 503.20000000000005v2.1M237.5 503.20000000000005v2.1M243.5 503.20000000000005v2.1M249.5 503.20000000000005v2.8M255.5 503.20000000000005v2.1M261.5 503.20000000000005v2.1M267.5 503.20000000000005v2.1M274.5 503.20000000000005v2.1M280.5 503.20000000000005v2.8M286.5 503.20000000000005v2.1M292.5 503.20000000000005v2.1M298.5 503.20000000000005v2.1M304.5 503.20000000000005v2.1M310.5 503.20000000000005v2.8M316.5 503.20000000000005v2.1M323.5 503.20000000000005v2.1M329.5 503.20000000000005v2.1M335.5 503.20000000000005v2.1M341.5 503.20000000000005v2.8M347.5 503.20000000000005v2.1M353.5 503.20000000000005v2.1M359.5 503.20000000000005v2.1M365.5 503.20000000000005v2.1M372.5 503.20000000000005v2.8M378.5 503.20000000000005v2.1M384.5 503.20000000000005v2.1M390.5 503.20000000000005v2.1M396.5 503.20000000000005v2.1M402.5 503.20000000000005v2.8M408.5 503.20000000000005v2.1M414.5 503.20000000000005v2.1M421.5 503.20000000000005v2.1M427.5 503.20000000000005v2.1M433.5 503.20000000000005v2.8M439.5 503.20000000000005v2.1M445.5 503.20000000000005v2.1M451.5 503.20000000000005v2.1M457.5 503.20000000000005v2.1M463.5 503.20000000000005v2.8M469.5 503.20000000000005v2.1M476.5 503.20000000000005v2.1M482.5 503.20000000000005v2.1M488.5 503.20000000000005v2.1M494.5 503.20000000000005v2.8M500.5 503.20000000000005v2.1M506.5 503.20000000000005v2.1M512.5 503.20000000000005v2.1M518.5 503.20000000000005v2.1M525.5 503.20000000000005v2.8M531.5 503.20000000000005v2.1M537.5 503.20000000000005v2.1M543.5 503.20000000000005v2.1M549.5 503.20000000000005v2.1M555.5 503.20000000000005v2.8M561.5 503.20000000000005v2.1M567.5 503.20000000000005v2.1M574.5 503.20000000000005v2.1M580.5 503.20000000000005v2.1M586.5 503.20000000000005v2.8M592.5 503.20000000000005v2.1M598.5 503.20000000000005v2.1M604.5 503.20000000000005v2.1M610.5 503.20000000000005v2.1M616.5 503.20000000000005v2.8M623.5 503.20000000000005v2.1M629.5 503.20000000000005v2.1M635.5 503.20000000000005v2.1M641.5 503.20000000000005v2.1M647.5 503.20000000000005v2.8M653.5 503.20000000000005v2.1M659.5 503.20000000000005v2.1M665.5 503.20000000000005v2.1M671.5 503.20000000000005v2.1M678.5 503.20000000000005v2.8M684.5 503.20000000000005v2.1M690.5 503.20000000000005v2.1M696.5 503.20000000000005v2.1M702.5 503.20000000000005v2.1M708.5 503.20000000000005v2.8M714.5 503.20000000000005v2.1M720.5 503.20000000000005v2.1M727.5 503.20000000000005v2.1M733.5 503.20000000000005v2.1M739.5 503.20000000000005v2.8M745.5 503.20000000000005v2.1M751.5 503.20000000000005v2.1M757.5 503.20000000000005v2.1M763.5 503.20000000000005v2.1M769.5 503.20000000000005v2.8M776.5 503.20000000000005v2.1M782.5 503.20000000000005v2.1M788.5 503.20000000000005v2.1M794.5 503.20000000000005v2.1M800.5 503.20000000000005v2.8M806.5 503.20000000000005v2.1M812.5 503.20000000000005v2.1M818.5 503.20000000000005v2.1M825.5 503.20000000000005v2.1M831.5 503.20000000000005v2.8M837.5 503.20000000000005v2.1M843.5 503.20000000000005v2.1M849.5 503.20000000000005v2.1M855.5 503.20000000000005v2.1M861.5 503.20000000000005v2.8M867.5 503.20000000000005v2.1M874.5 503.20000000000005v2.1M880.5 503.20000000000005v2.1M886.5 503.20000000000005v2.1M892.5 503.20000000000005v2.8M898.5 503.20000000000005v2.1M904.5 503.20000000000005v2.1M910.5 503.20000000000005v2.1M916.5 503.20000000000005v2.1M922.5 503.20000000000005v2.8M929.5 503.20000000000005v2.1M935.5 503.20000000000005v2.1M941.5 503.20000000000005v2.1M947.5 503.20000000000005v2.1M953.5 503.20000000000005v2.8M959.5 503.20000000000005v2.1M965.5 503.20000000000005v2.1M971.5 503.20000000000005v2.1M978.5 503.20000000000005v2.1M984.5 503.20000000000005v2.8M990.5 503.20000000000005v2.1M996.5 503.20000000000005v2.1M1002.5 503.20000000000005v2.1M1007.6 501.5h2.4M1007.6 493.5h1.5M1007.6 484.5h1.5M1007.6 475.5h1.5M1007.6 467.5h1.5M1007.6 458.5h2.4M1007.6 449.5h1.5M1007.6 441.5h1.5M1007.6 432.5h1.5M1007.6 423.5h1.5M1007.6 415.5h2.4M1007.6 406.5h1.5M1007.6 397.5h1.5M1007.6 389.5h1.5M1007.6 380.5h1.5M1007.6 371.5h2.4M1007.6 363.5h1.5M1007.6 354.5h1.5M1007.6 345.5h1.5M1007.6 337.5h1.5M1007.6 328.5h2.4M1007.6 319.5h1.5M1007.6 311.5h1.5M1007.6 302.5h1.5M1007.6 293.5h1.5M1007.6 285.5h2.4M1007.6 276.5h1.5M1007.6 267.5h1.5M1007.6 259.5h1.5M1007.6 250.5h1.5M1007.6 242.5h2.4M1007.6 233.5h1.5M1007.6 224.5h1.5M1007.6 216.5h1.5M1007.6 207.5h1.5M1007.6 198.5h2.4M1007.6 190.5h1.5M1007.6 181.5h1.5M1007.6 172.5h1.5M1007.6 164.5h1.5M1007.6 155.5h2.4M1007.6 146.5h1.5M1007.6 138.5h1.5M1007.6 129.5h1.5M1007.6 120.5h1.5M1007.6 112.5h2.4M1007.6 103.5h1.5M1007.6 94.5h1.5M1007.6 86.5h1.5M1007.6 77.5h1.5" stroke="#333" stroke-width="1" fill="none"/><g fill="#151515"><text transform="translate(176.8 466.2) rotate(-90)" text-anchor="middle" font-size="9.8">0.0</text><text transform="translate(176.8 435.1) rotate(-90)" text-anchor="middle" font-size="9.8">0.5</text><text transform="translate(176.8 404.0) rotate(-90)" text-anchor="middle" font-size="9.8">1.0</text><text transform="translate(176.8 372.9) rotate(-90)" text-anchor="middle" font-size="9.8">1.5</text><text transform="translate(176.8 341.8) rotate(-90)" text-anchor="middle" font-size="9.8">2.0</text><text transform="translate(176.8 310.7) rotate(-90)" text-anchor="middle" font-size="9.8">2.5</text><text transform="translate(176.8 279.6) rotate(-90)" text-anchor="middle" font-size="9.8">3.0</text><text transform="translate(176.8 248.5) rotate(-90)" text-anchor="middle" font-size="9.8">3.5</text><text transform="translate(176.8 217.4) rotate(-90)" text-anchor="middle" font-size="9.8">4.0</text><text transform="translate(176.8 186.3) rotate(-90)" text-anchor="middle" font-size="9.8">4.5</text><text transform="translate(176.8 155.2) rotate(-90)" text-anchor="middle" font-size="9.8">5.0</text><text transform="translate(176.8 124.1) rotate(-90)" text-anchor="middle" font-size="9.8">5.5</text><text transform="translate(176.8 93.0) rotate(-90)" text-anchor="middle" font-size="9.8">6.0</text><text transform="translate(176.6 74.6) rotate(-90)" text-anchor="middle" font-size="8.2" font-weight="bold">V</text><text x="209.8" y="513.2" font-size="9.5" textLength="18.4" lengthAdjust="spacingAndGlyphs">-0.02</text><text x="241.9" y="513.2" font-size="9.5" textLength="15.4" lengthAdjust="spacingAndGlyphs">0.00</text><text x="272.5" y="513.2" font-size="9.5" textLength="15.4" lengthAdjust="spacingAndGlyphs">0.02</text><text x="303.1" y="513.2" font-size="9.5" textLength="15.4" lengthAdjust="spacingAndGlyphs">0.04</text><text x="333.7" y="513.2" font-size="9.5" textLength="15.4" lengthAdjust="spacingAndGlyphs">0.06</text><text x="364.3" y="513.2" font-size="9.5" textLength="15.4" lengthAdjust="spacingAndGlyphs">0.08</text><text x="394.9" y="513.2" font-size="9.5" textLength="15.4" lengthAdjust="spacingAndGlyphs">0.10</text><text x="425.5" y="513.2" font-size="9.5" textLength="15.4" lengthAdjust="spacingAndGlyphs">0.12</text><text x="456.2" y="513.2" font-size="9.5" textLength="15.4" lengthAdjust="spacingAndGlyphs">0.14</text><text x="486.8" y="513.2" font-size="9.5" textLength="15.4" lengthAdjust="spacingAndGlyphs">0.16</text><text x="517.4" y="513.2" font-size="9.5" textLength="15.4" lengthAdjust="spacingAndGlyphs">0.18</text><text x="548.0" y="513.2" font-size="9.5" textLength="15.4" lengthAdjust="spacingAndGlyphs">0.20</text><text x="578.6" y="513.2" font-size="9.5" textLength="15.4" lengthAdjust="spacingAndGlyphs">0.22</text><text x="609.2" y="513.2" font-size="9.5" textLength="15.4" lengthAdjust="spacingAndGlyphs">0.24</text><text x="639.8" y="513.2" font-size="9.5" textLength="15.4" lengthAdjust="spacingAndGlyphs">0.26</text><text x="670.4" y="513.2" font-size="9.5" textLength="15.4" lengthAdjust="spacingAndGlyphs">0.28</text><text x="701.0" y="513.2" font-size="9.5" textLength="15.4" lengthAdjust="spacingAndGlyphs">0.30</text><text x="731.6" y="513.2" font-size="9.5" textLength="15.4" lengthAdjust="spacingAndGlyphs">0.32</text><text x="762.2" y="513.2" font-size="9.5" textLength="15.4" lengthAdjust="spacingAndGlyphs">0.34</text><text x="792.8" y="513.2" font-size="9.5" textLength="15.4" lengthAdjust="spacingAndGlyphs">0.36</text><text x="823.5" y="513.2" font-size="9.5" textLength="15.4" lengthAdjust="spacingAndGlyphs">0.38</text><text x="854.1" y="513.2" font-size="9.5" textLength="15.4" lengthAdjust="spacingAndGlyphs">0.40</text><text x="884.7" y="513.2" font-size="9.5" textLength="15.4" lengthAdjust="spacingAndGlyphs">0.42</text><text x="915.3" y="513.2" font-size="9.5" textLength="15.4" lengthAdjust="spacingAndGlyphs">0.44</text><text x="945.9" y="513.2" font-size="9.5" textLength="15.4" lengthAdjust="spacingAndGlyphs">0.46</text><text x="993" y="513.4" text-anchor="middle" font-size="9.4">A</text><text transform="translate(1008.9 458.6) rotate(90)" text-anchor="middle" font-size="9.2">1</text><text transform="translate(1008.9 415.3) rotate(90)" text-anchor="middle" font-size="9.2">2</text><text transform="translate(1008.9 372.0) rotate(90)" text-anchor="middle" font-size="9.2">3</text><text transform="translate(1008.9 328.6) rotate(90)" text-anchor="middle" font-size="9.2">4</text><text transform="translate(1008.9 285.3) rotate(90)" text-anchor="middle" font-size="9.2">5</text><text transform="translate(1008.9 242.0) rotate(90)" text-anchor="middle" font-size="9.2">6</text><text transform="translate(1008.9 198.7) rotate(90)" text-anchor="middle" font-size="9.2">7</text><text transform="translate(1008.9 155.4) rotate(90)" text-anchor="middle" font-size="9.2">8</text><text transform="translate(1008.9 112.0) rotate(90)" text-anchor="middle" font-size="9.2">9</text></g><path d="M264.0 466.1 L280.2 465.6 L356.6 460.2 L387.5 457.8 L432.6 450.8 L448.2 442.5 L479.1 428.8 L509.3 413.6 L539.8 396.8 L570.7 383.4 L600.8 370.2 L647.4 337.5 L707.9 302.9 L754.2 278.8 L799.9 248.9 L846.3 211.4 L891.4 155.1 L937.8 104.6" stroke="#ee0f0f" stroke-width="1.5" fill="none" stroke-linejoin="round"/><path d="M264.0 466.1L280.2 465.6" stroke="#e00c0c" stroke-width="2.6" fill="none"/><g fill="#ee0f0f"><rect x="262.1" y="464.2" width="3.8" height="3.8" rx="0.9"/><rect x="278.3" y="463.7" width="3.8" height="3.8" rx="0.9"/><rect x="354.7" y="458.3" width="3.8" height="3.8" rx="0.9"/><rect x="385.6" y="455.9" width="3.8" height="3.8" rx="0.9"/><rect x="430.7" y="448.9" width="3.8" height="3.8" rx="0.9"/><rect x="446.3" y="440.6" width="3.8" height="3.8" rx="0.9"/><rect x="477.2" y="426.9" width="3.8" height="3.8" rx="0.9"/><rect x="507.4" y="411.7" width="3.8" height="3.8" rx="0.9"/><rect x="537.9" y="394.9" width="3.8" height="3.8" rx="0.9"/><rect x="568.8" y="381.5" width="3.8" height="3.8" rx="0.9"/><rect x="598.9" y="368.3" width="3.8" height="3.8" rx="0.9"/><rect x="645.5" y="335.6" width="3.8" height="3.8" rx="0.9"/><rect x="706.0" y="301.0" width="3.8" height="3.8" rx="0.9"/><rect x="752.3" y="276.9" width="3.8" height="3.8" rx="0.9"/><rect x="798.0" y="247.0" width="3.8" height="3.8" rx="0.9"/><rect x="844.4" y="209.5" width="3.8" height="3.8" rx="0.9"/><rect x="889.5" y="153.2" width="3.8" height="3.8" rx="0.9"/><rect x="935.9" y="102.7" width="3.8" height="3.8" rx="0.9"/></g><path d="M1012 515.4H1019.4V304" stroke="#79c96b" stroke-width="1.4" fill="none"/>
<path d="M179.6 522.2V533.8L182.3 531.3L184.7 536.8L186.8 535.9L184.4 530.7H188.3Z" fill="#fff" stroke="#111" stroke-width="1" stroke-linejoin="round"/>
<g transform="translate(212.1 528.6) scale(1.06 1.02)"><path d="M-3.6 7 C-4.2 5.2 -6.4 3.2 -6.4 0.8 C-6.4 -0.6 -5 -0.6 -4.6 0.6 L-4.5 1.4 V-4.4 A1.2 1.2 0 0 1 -2.1 -4.4 V-5.6 A1.2 1.2 0 0 1 0.3 -5.6 V-5.4 A1.2 1.2 0 0 1 2.7 -5.4 V-4.2 A1.2 1.2 0 0 1 5.1 -4.2 V1.6 C5.1 4 4.2 5.4 3.6 7 Z" fill="#fff" stroke="#111" stroke-width="1" stroke-linejoin="round"/><path d="M-2.1 -4.4V-1M0.3 -5.4V-1M2.7 -4.6V-1" stroke="#111" stroke-width="0.8"/></g>
<defs><clipPath id="cpb"><rect x="160" y="515" width="240" height="24.4"/></clipPath></defs>
<path d="M230 524.6H238M234.1 520.4V528.8" stroke="#111" stroke-width="1.1"/><g clip-path="url(#cpb)"><g transform="translate(237.4 522.2) scale(0.93)"><path d="M0 1.3 A1.3 1.3 0 0 1 2.6 1.3 V6.2 A1.3 1.3 0 0 1 5.2 6.6 V7.2 A1.3 1.3 0 0 1 7.8 7.4 V8 A1.3 1.3 0 0 1 10.4 8.6 V12.5 C10.4 15 9.4 16 8.8 17.8 H2.4 C1.6 15.5 -1.6 13 -3.2 10.6 C-4 9.4 -2.6 8.4 -1.4 9.4 L0 10.8 Z" fill="#fff" stroke="#111" stroke-width="1.05" stroke-linejoin="round"/><path d="M2.6 6.2V10M5.2 7V10.4M7.8 7.8V10.8" stroke="#111" stroke-width="0.85"/></g></g>
<rect x="258.8" y="524" width="8.2" height="6.4" fill="#fff" stroke="#2a2a9a" stroke-width="1.4"/><g clip-path="url(#cpb)"><g transform="translate(270.4 527.5) scale(0.93)"><path d="M0 1.3 A1.3 1.3 0 0 1 2.6 1.3 V6.2 A1.3 1.3 0 0 1 5.2 6.6 V7.2 A1.3 1.3 0 0 1 7.8 7.4 V8 A1.3 1.3 0 0 1 10.4 8.6 V12.5 C10.4 15 9.4 16 8.8 17.8 H2.4 C1.6 15.5 -1.6 13 -3.2 10.6 C-4 9.4 -2.6 8.4 -1.4 9.4 L0 10.8 Z" fill="#fff" stroke="#111" stroke-width="1.05" stroke-linejoin="round"/><path d="M2.6 6.2V10M5.2 7V10.4M7.8 7.8V10.8" stroke="#111" stroke-width="0.85"/></g></g>
<path d="M295.5 530.8L302.5 537.3" stroke="#5e6a16" stroke-width="2.6" stroke-linecap="round"/><path d="M295.5 530.6L302.5 537.1" stroke="#9aac22" stroke-width="1.5" stroke-linecap="round"/><circle cx="291.9" cy="526.9" r="5.2" fill="#fbfbfb" stroke="#1c1c1c" stroke-width="1.1"/><path d="M289.9 526.9H293.9" stroke="#111" stroke-width="1.3"/><path d="M291.9 524.9V528.9" stroke="#111" stroke-width="1.3"/><path d="M323.6 530.8L330.6 537.3" stroke="#5e6a16" stroke-width="2.6" stroke-linecap="round"/><path d="M323.6 530.6L330.6 537.1" stroke="#9aac22" stroke-width="1.5" stroke-linecap="round"/><circle cx="320" cy="526.9" r="5.2" fill="#fbfbfb" stroke="#1c1c1c" stroke-width="1.1"/><path d="M318 526.9H322" stroke="#111" stroke-width="1.3"/>
<g><path d="M357.6 526L362.4 519.4L369 521.6L365.4 528.6Z" fill="#fbfcff" stroke="#9a9fc0" stroke-width="0.7"/><path d="M361 524.6L363.8 521M362.8 525.6L365.8 521.6M364.6 526.4L367.4 522.6" stroke="#4a55c8" stroke-width="0.9"/><path d="M349.6 528.6L357.6 524L371 528V533.6L362.6 538.4L349.6 534Z" fill="#bdbdbd" stroke="#6d6d6d" stroke-width="0.8" stroke-linejoin="round"/><path d="M350 528.6L357.6 524.4L370.6 528.2L362.6 532.6Z" fill="#e4e4e4"/><path d="M355.6 527.6L358.6 525.8L367 528.2L363.8 530Z" fill="#8c8c8c"/><path d="M349.6 528.6L362.6 532.8L371 528M362.6 532.8V538.4" stroke="#777" stroke-width="0.8" fill="none"/><path d="M362.8 533.4L370.8 528.8V533.4L362.8 538Z" fill="#8f8f8f"/><path d="M351.2 531.6L361 534.8" stroke="#4a4a4a" stroke-width="1.3"/></g>
<text class="ss" x="499.8" y="534" font-size="10" font-weight="bold" fill="#000">x</text><text class="ss" x="601.8" y="534.2" font-size="12" font-weight="bold" fill="#000">y</text>
<text class="cj" x="505.6" y="534.1" font-size="12.2" fill="#000" textLength="28.5" lengthAdjust="spacingAndGlyphs">标尺:</text>
<text class="cj" x="609" y="534.1" font-size="12.2" fill="#000" textLength="28.5" lengthAdjust="spacingAndGlyphs">标尺:</text>
</svg>
</div>
</body></html>
